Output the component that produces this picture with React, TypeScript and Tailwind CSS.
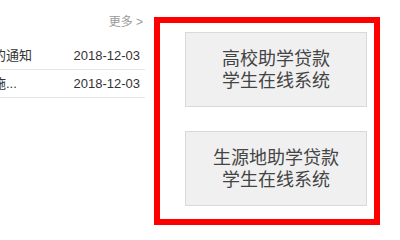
import React from 'react';

type Notice = {
    title: string;
    date: string;
};

const notices: Notice[] = [
    { title: '的通知', date: '2018-12-03' },
    { title: '施...', date: '2018-12-03' },
];

const systems = [
    ['高校助学贷款', '学生在线系统'],
    ['生源地助学贷款', '学生在线系统'],
];

const App: React.FC = () => {
    return (
        <div
            className="flex w-[400px] h-[240px] bg-white overflow-hidden text-[#333]"
            style={{ fontFamily: '"Liberation Sans", "Noto Sans CJK SC", sans-serif' }}
        >
            {/* notice list, clipped at the left edge */}
            <div className="w-[152px] -ml-[7px] shrink-0">
                <div className="flex justify-end h-[42px] pt-[14px] text-[12px] text-[#999] leading-[16px]">
                    <span className="mr-[2px]">更多 &gt;</span>
                </div>
                {notices.map((n, i) => (
                    <div
                        key={i}
                        className="flex justify-between items-center h-[28px] border-b border-[#e5e5e5] text-[13px] pr-[5px]"
                    >
                        <span className="whitespace-nowrap">{n.title}</span>
                        <span>{n.date}</span>
                    </div>
                ))}
            </div>

            {/* system links */}
            <div className="ml-[9px] mt-[17px] w-[226px] h-[208px] border-[6px] border-[#ff0000] shrink-0 pt-[9px] pl-[25px] pr-[7px] flex flex-col gap-[24px]">
                {systems.map((lines, i) => (
                    <div
                        key={i}
                        className="h-[75px] bg-[#f0f0f0] border border-[#d9d9d9] flex flex-col items-center justify-center text-[18px] leading-[22px] text-[#444]"
                    >
                        {lines.map((l, j) => (
                            <span key={j}>{l}</span>
                        ))}
                    </div>
                ))}
            </div>
        </div>
    );
};

export default App;
